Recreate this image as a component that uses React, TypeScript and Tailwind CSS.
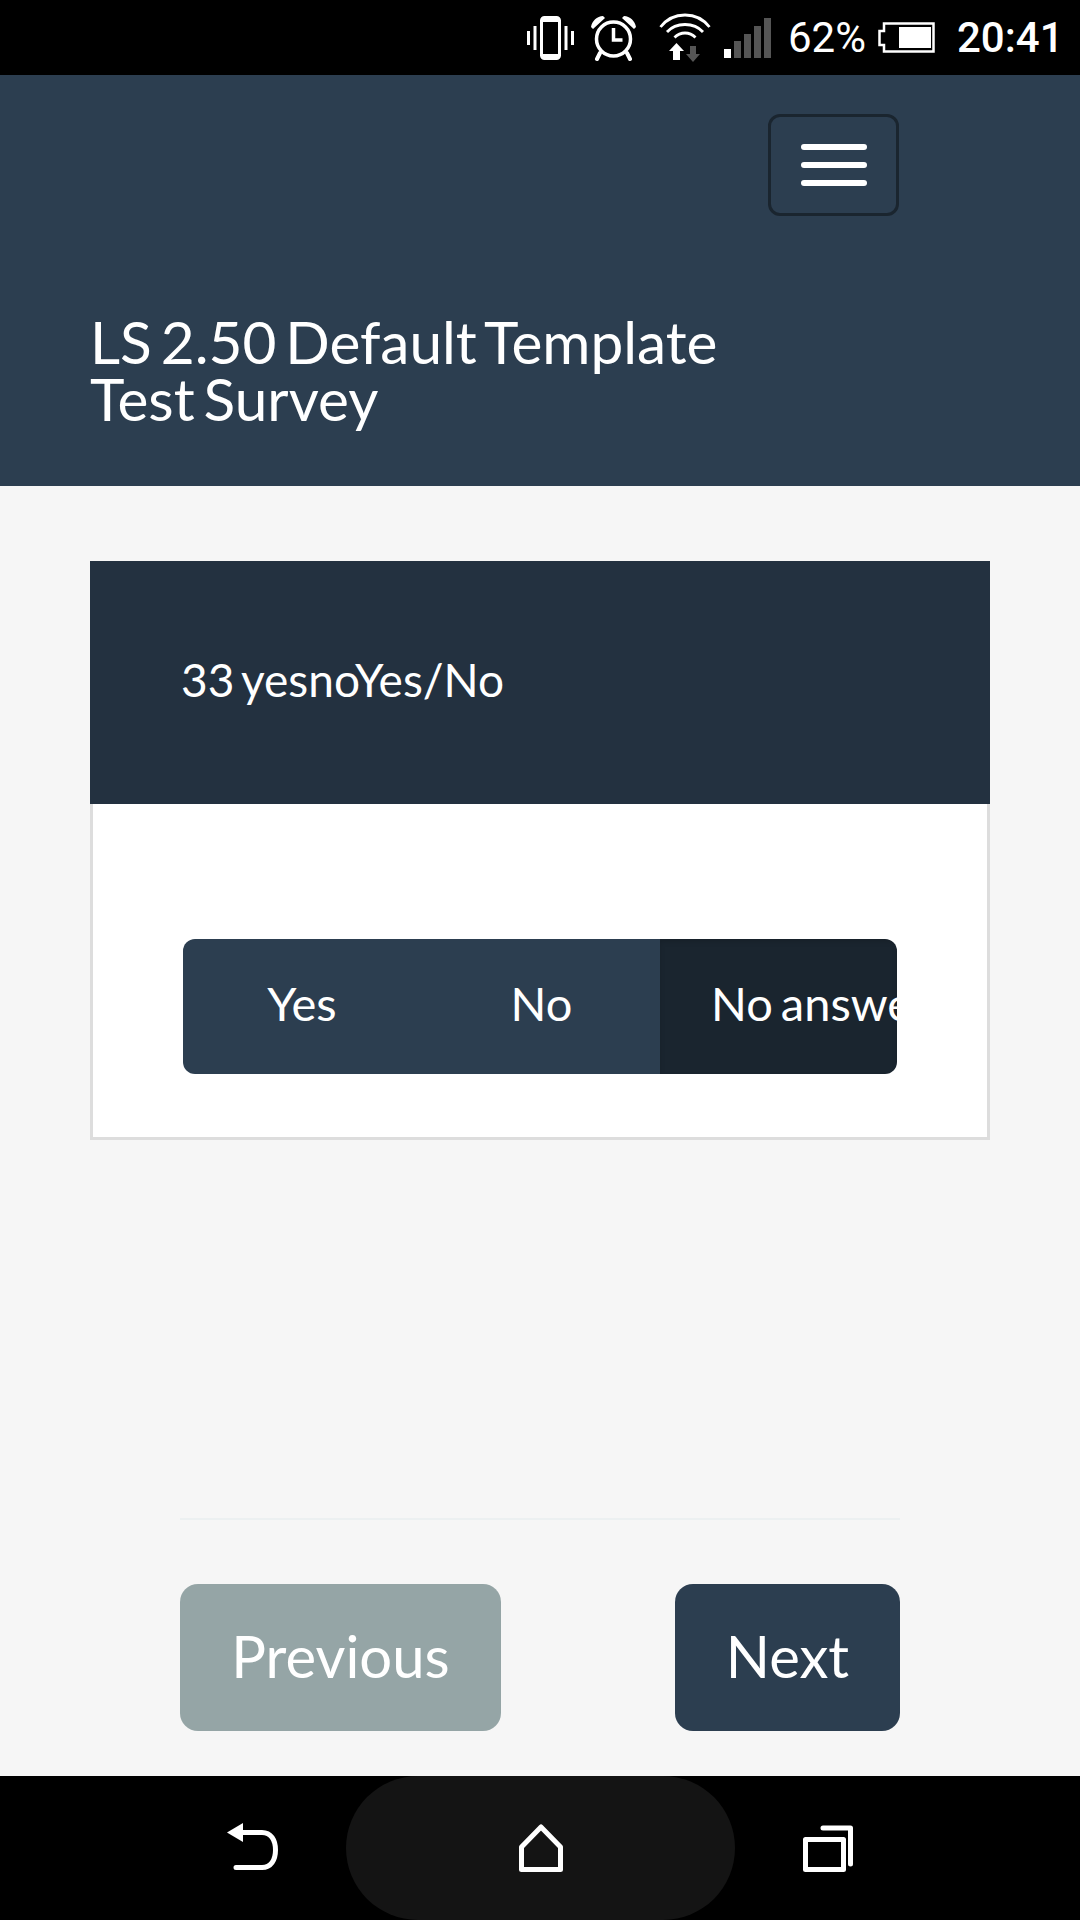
const lato = { fontFamily: "Lato, sans-serif" };

function StatusIcons() {
  return (
    <div className="flex h-[75px] items-center bg-black pl-[527px] text-white">
      {/* vibrate */}
      <svg width="47" height="44" viewBox="0 0 47 44" className="shrink-0">
        <rect x="14.5" y="1.5" width="18" height="41" rx="3" fill="none" stroke="#fff" strokeWidth="3" />
        <path d="M14 6h19v-3H14zM14 41h19v-3H14z" fill="#fff" />
        <path d="M8 10v24M1.5 15v14M39 10v24M45.5 15v14" stroke="#fff" strokeWidth="3" fill="none" />
      </svg>
      {/* alarm */}
      <svg width="47" height="46" viewBox="0 0 47 46" className="ml-[16px] shrink-0">
        <circle cx="23.5" cy="24" r="17" fill="none" stroke="#fff" strokeWidth="3.5" />
        <path d="M23.5 13v12h9" fill="none" stroke="#fff" strokeWidth="3.5" />
        <path d="M1 12C2 6 7 1 13 1l2 2L3 14zM46 12C45 6 40 1 34 1l-2 2 12 11z" fill="#fff" />
        <path d="M10 38l-3 6M37 38l3 6" stroke="#fff" strokeWidth="4" strokeLinecap="round" />
      </svg>
      {/* wifi with arrows */}
      <svg width="52" height="50" viewBox="0 0 52 50" className="ml-[22px] shrink-0">
        <path d="M1.5 14C14-2 38-2 50.5 14M8 19c9-10 27-10 36 0M15.5 24.5c6-6 15-6 21 0" fill="none" stroke="#fff" strokeWidth="2.8" />
        <path d="M17.5 30l7.5 8h-4v9h-7v-9h-4z" fill="#fff" />
        <path d="M31 33h6v8h4l-7 8-7-8h4z" fill="#555" />
      </svg>
      {/* signal */}
      <svg width="47" height="40" viewBox="0 0 47 40" className="ml-[13px] shrink-0">
        <rect x="0" y="31" width="7" height="9" fill="#fff" />
        <rect x="10" y="23" width="7" height="17" fill="#555" />
        <rect x="20" y="16" width="7" height="24" fill="#555" />
        <rect x="30" y="8" width="7" height="32" fill="#555" />
        <rect x="40" y="0" width="7" height="40" fill="#555" />
      </svg>
      <span className="ml-[17px] w-[77px] text-[42px] leading-none" style={{ fontFamily: "Roboto, sans-serif" }}>
        62%
      </span>
      {/* battery */}
      <svg width="57" height="31" viewBox="0 0 57 31" className="ml-[13px] shrink-0">
        <path d="M6 1.5h49.5v28H6V23H1.5V9H6z" fill="none" stroke="#fff" strokeWidth="2.5" />
        <rect x="21" y="5" width="32" height="21" fill="#fff" />
      </svg>
      <span className="ml-[22px] text-[42px] font-medium leading-none" style={{ fontFamily: "Roboto, sans-serif" }}>
        20:41
      </span>
    </div>
  );
}

function NavBar() {
  return (
    <div className="flex h-[144px] items-center justify-between bg-black pl-[227px] pr-[227px]">
      <svg width="51" height="48" viewBox="0 0 51 48" className="mb-[2px] shrink-0">
        <path d="M14 9.5H35C44 9.5 48.5 17 48.5 27S44 44.5 35 44.5H9" fill="none" stroke="#fff" strokeWidth="5" strokeLinecap="round" />
        <path d="M0 9.5L16 0v19z" fill="#fff" />
      </svg>
      <div className="flex h-[144px] w-[389px] items-center justify-center rounded-[72px] bg-[#141414]">
        <svg width="44" height="48" viewBox="0 0 44 48">
          <path d="M22 3L2.5 23v22.5h39V23z" fill="none" stroke="#fff" strokeWidth="5" strokeLinejoin="round" />
        </svg>
      </div>
      <svg width="50" height="47" viewBox="0 0 50 47" className="shrink-0">
        <rect x="2.5" y="14.5" width="38" height="30" fill="none" stroke="#fff" strokeWidth="5" strokeLinejoin="round" />
        <path d="M20 3h27.5v36" fill="none" stroke="#fff" strokeWidth="5" strokeLinecap="round" strokeLinejoin="round" />
      </svg>
    </div>
  );
}

export default function App() {
  return (
    <div className="flex h-[1920px] w-[1080px] flex-col overflow-hidden bg-[#f6f6f6]" style={lato}>
      <StatusIcons />

      {/* Header */}
      <div className="h-[411px] bg-[#2c3e50] pt-[39px] pl-[90px]">
        <div className="ml-[678px] flex h-[102px] w-[131px] flex-col items-center justify-center gap-[12px] rounded-[12px] border-[3px] border-[#1a252f]">
          <span className="h-[6px] w-[66px] rounded-[3px] bg-white" />
          <span className="h-[6px] w-[66px] rounded-[3px] bg-white" />
          <span className="h-[6px] w-[66px] rounded-[3px] bg-white" />
        </div>
        <h1 className="mt-[97px] text-[58.5px] leading-[57px] [word-spacing:-6px] text-white">
          LS 2.50 Default Template
          <br />
          Test Survey
        </h1>
      </div>

      {/* Question card */}
      <div className="mx-[90px] mt-[75px] h-[579px] border-[3px] border-t-0 border-[#dddddd] bg-white">
        <div className="-mx-[3px] flex h-[243px] items-center bg-[#233140] pb-[6px] pl-[91px] text-[46px] [word-spacing:-4px] text-white">
          33 yesnoYes/No
        </div>
        <div className="mx-[90px] mt-[135px] grid h-[135px] w-[714px] grid-cols-[238px_239px_237px] overflow-hidden rounded-[12px] text-[47px] [word-spacing:-4px] text-white">
          <div className="flex items-center justify-center bg-[#2c3e50] pb-[6px]">Yes</div>
          <div className="flex items-center justify-center bg-[#2c3e50] pb-[6px] pl-[2px]">No</div>
          <div className="flex items-center overflow-hidden whitespace-nowrap bg-[#1a252f] pb-[6px] pl-[51px] shadow-[inset_0_3px_5px_rgba(0,0,0,0.125)]">
            No answer
          </div>
        </div>
      </div>

      {/* Footer nav */}
      <div className="mx-[180px] mt-[378px] h-[2px] bg-[#ecf0f1]" />
      <div className="mx-[180px] mt-[64px] flex justify-between text-[58px] text-white">
        <button className="h-[147px] w-[321px] rounded-[18px] bg-[#95a5a6] pb-[4px]">Previous</button>
        <button className="h-[147px] w-[225px] rounded-[18px] bg-[#2c3e50] pb-[4px]">Next</button>
      </div>

      <div className="mt-auto">
        <NavBar />
      </div>
    </div>
  );
}
